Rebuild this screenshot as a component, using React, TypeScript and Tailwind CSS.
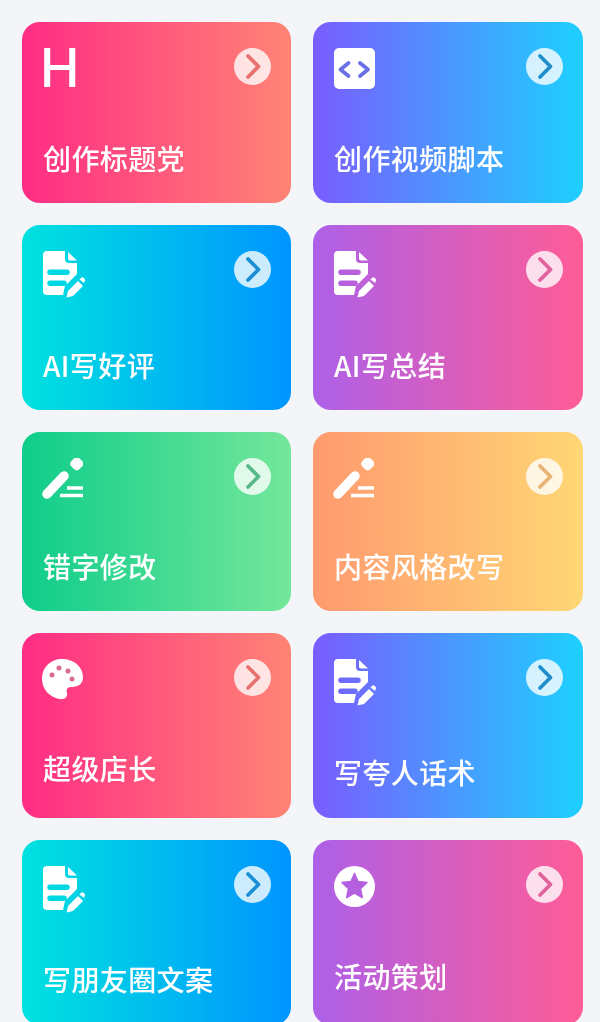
import type { ReactNode } from 'react';

const DocIcon = () => (
  <svg width="44" height="47" viewBox="0 0 44 47" fill="#fff">
    <path
      fillRule="evenodd"
      d="M4 0H22V8a4 4 0 0 0 4 4h8V23L23 34a5 5 0 0 0-1.500 3L20 44H4a4 4 0 0 1-4-4V4a4 4 0 0 1 4-4ZM7 18.500a2.750 2.750 0 0 0 0 5.500h17a2.750 2.750 0 0 0 0-5.500ZM7 29.500a2.750 2.750 0 0 0 0 5.500h14a2.750 2.750 0 0 0 0-5.500Z"
    />
    <path d="M25 1 34 9.500H27a2 2 0 0 1-2-2Z" />
    <path d="M23.500 46.500 25 40 35 30 40 35 30 45Z" />
    <path d="M36.500 28.500 38 27a2 2 0 0 1 2.800 0l.7.700a2 2 0 0 1 0 2.800L41 32Z" />
  </svg>
);

const PenIcon = () => (
  <svg className="-ml-px" width="41" height="41" viewBox="0 0 41 41" fill="none" stroke="#fff">
    <path d="M5 36 22 18" strokeWidth="9.500" strokeLinecap="round" />
    <rect x="29" y="0" width="11.500" height="11.500" rx="4" fill="#fff" stroke="none" transform="rotate(45 34.750 5.750)" />
    <path d="M25 30H41M18 37.500H41" strokeWidth="3.500" />
  </svg>
);

const PaletteIcon = () => (
  <svg className="-ml-px" width="41" height="41" viewBox="0 0 41 41">
    <path
      fill="#fff"
      d="M20 0C32 0 41 8 41 18 41 26 35 28 29 28 25 28 24 31 25 34 26 38 22 41 18 40 8 39 0 30 0 20 0 8 9 0 20 0Z"
    />
    <circle cx="17" cy="9" r="2.500" fill="#d96a93" />
    <circle cx="26" cy="12" r="2.500" fill="#d96a93" />
    <circle cx="30" cy="20" r="2.500" fill="#d96a93" />
    <circle cx="10" cy="16" r="2.500" fill="#d96a93" />
  </svg>
);

const StarIcon = () => (
  <svg width="41" height="41" viewBox="0 0 41 41">
    <circle cx="20.500" cy="20.500" r="20.500" fill="#fff" />
    <path
      d="M20.500 7.500 24 15.500 33 16.500 26.500 22.600 28.300 31.500 20.500 27 12.700 31.500 14.500 22.600 8 16.500 17 15.500Z"
      fill="#b45fe0"
      stroke="#b45fe0"
      strokeWidth="1.500"
      strokeLinejoin="round"
    />
  </svg>
);

const CodeIcon = () => (
  <svg width="41" height="41" viewBox="0 0 41 41">
    <rect width="41" height="41" rx="5" fill="#fff" />
    <path
      d="M14.500 15 6.500 21.500 14.500 28M26 15 34 21.500 26 28"
      fill="none"
      stroke="#6b6fe6"
      strokeWidth="3.800"
      strokeLinecap="round"
      strokeLinejoin="round"
    />
  </svg>
);

type Tool = {
  title: string;
  icon: ReactNode;
  card: string;
  label: string;
  chevron: string;
};

const HEADING = (
  <span className="-ml-[3px] block h-[41px] font-['Inter',sans-serif] text-[53px] font-medium leading-[41px]">H</span>
);

const tools: Tool[] = [
  { title: '创作标题党', icon: HEADING, card: 'h-[181px] bg-linear-to-r/srgb from-[#ff2c84] to-[#ff8475]', label: 'pb-[25px]', chevron: '#e8716f' },
  { title: '创作视频脚本', icon: <CodeIcon />, card: 'h-[181px] bg-linear-to-r/srgb from-[#7a5cff] to-[#1dd0ff]', label: 'pb-[25px]', chevron: '#1f8ecb' },
  { title: 'AI写好评', icon: <DocIcon />, card: 'h-[185px] bg-linear-to-r/srgb from-[#00e2df] to-[#0095ff]', label: 'pb-[25px]', chevron: '#1b8fd4' },
  { title: 'AI写总结', icon: <DocIcon />, card: 'h-[185px] bg-linear-to-r/srgb from-[#ad60e8] to-[#ff5c97]', label: 'pb-[25px]', chevron: '#e2629c' },
  { title: '错字修改', icon: <PenIcon />, card: 'h-[179px] bg-linear-to-r/srgb from-[#0ecd8a] to-[#74e79a]', label: 'pb-[25px]', chevron: '#57b98a' },
  { title: '内容风格改写', icon: <PenIcon />, card: 'h-[179px] bg-linear-to-r/srgb from-[#ff9a6f] to-[#ffd775]', label: 'pb-[25px]', chevron: '#e8b374' },
  { title: '超级店长', icon: <PaletteIcon />, card: 'h-[185px] bg-linear-to-r/srgb from-[#ff2c84] to-[#ff8475]', label: 'pb-[30px]', chevron: '#e8716f' },
  { title: '写夸人话术', icon: <DocIcon />, card: 'h-[185px] bg-linear-to-r/srgb from-[#7a5cff] to-[#1dd0ff]', label: 'pb-[26px]', chevron: '#1f8ecb' },
  { title: '写朋友圈文案', icon: <DocIcon />, card: 'h-[185px] bg-linear-to-r/srgb from-[#00e2df] to-[#0095ff]', label: 'pb-[26px]', chevron: '#1b8fd4' },
  { title: '活动策划', icon: <StarIcon />, card: 'h-[185px] bg-linear-to-r/srgb from-[#ad60e8] to-[#ff5c97]', label: 'pb-[29px]', chevron: '#e2629c' },
];

function ArrowBadge({ color }: { color: string }) {
  return (
    <span className="flex h-[37px] w-[37px] items-center justify-center rounded-full bg-white/80">
      <svg width="37" height="37" viewBox="0 0 37 37" fill="none">
        <path
          d="M14 8 24.500 18.500 14 29"
          stroke={color}
          strokeWidth="3.800"
          strokeLinecap="round"
          strokeLinejoin="round"
        />
      </svg>
    </span>
  );
}

export default function App() {
  return (
    <div className="h-[1022px] overflow-hidden bg-[#f3f5f9] font-['Noto_Sans_CJK_SC',sans-serif] text-white">
      <div className="grid grid-cols-[269px_270px] gap-x-[22px] gap-y-[22px] pl-[22px] pt-[22px] blur-[0.5px]">
        {tools.map(tool => (
          <div key={tool.title} className={`flex flex-col rounded-[18px] pt-[26px] ${tool.card}`}>
            <div className="flex items-start justify-between pl-[21px] pr-5">
              {tool.icon}
              <ArrowBadge color={tool.chevron} />
            </div>
            <p className={`mt-auto pl-[21px] text-[28px] font-medium leading-10 tracking-[0.4px] ${tool.label}`}>{tool.title}</p>
          </div>
        ))}
      </div>
    </div>
  );
}
